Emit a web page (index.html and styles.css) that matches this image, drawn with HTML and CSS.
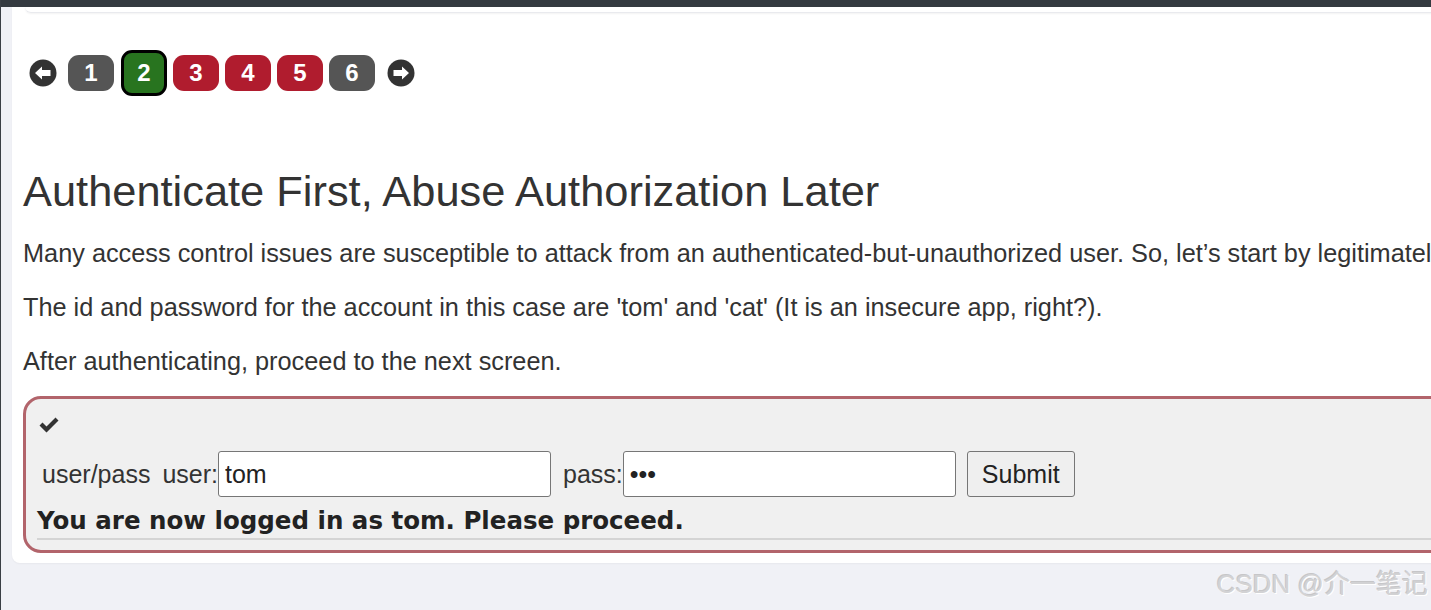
FILE: index.html
```html
<!DOCTYPE html>
<html>
<head>
<meta charset="utf-8">
<link rel="stylesheet" href="styles.css">
</head>
<body>
<div class="topbar"></div>
<div class="page">
  <div class="card">
    <div class="prev-card"></div>
    <div class="content">
      <div class="pager">
        <span class="arrow">
          <svg width="28" height="28" viewBox="0 0 28 28"><circle cx="14" cy="14" r="13.5" fill="#333"/><path d="M6 14 L13 7.5 L13 11 L21.5 11 L21.5 17 L13 17 L13 20.5 Z" fill="#fff"/></svg>
        </span>
        <span class="pg gray">1</span>
        <span class="pg green">2</span>
        <span class="pg red">3</span>
        <span class="pg red">4</span>
        <span class="pg red">5</span>
        <span class="pg gray">6</span>
        <span class="arrow arrow-right">
          <svg width="28" height="28" viewBox="0 0 28 28"><circle cx="14" cy="14" r="13.5" fill="#333"/><path d="M22 14 L15 7.5 L15 11 L6.5 11 L6.5 17 L15 17 L15 20.5 Z" fill="#fff"/></svg>
        </span>
      </div>
      <h2 class="title">Authenticate First, Abuse Authorization Later</h2>
      <p class="para">Many access control issues are susceptible to attack from an authenticated-but-unauthorized user. So, let’s start by legitimately authenticating. Then, we will look for ways to exploit authorization weaknesses.</p>
      <p class="para">The id and password for the account in this case are 'tom' and 'cat' (It is an insecure app, right?).</p>
      <p class="para">After authenticating, proceed to the next screen.</p>
      <div class="attack">
        <div class="check">
          <svg width="22" height="18" viewBox="0 0 22 18"><path d="M1.5 9.5 L4.5 6.5 L8.5 10.5 L17.5 1.5 L20.5 4.5 L8.5 16.5 Z" fill="#333"/></svg>
        </div>
        <form class="row">
          <span class="lbl">user/pass</span>
          <span class="lbl user-lbl">user:</span><input class="field" type="text" value="tom">
          <span class="lbl pass-lbl">pass:</span><input class="field" type="password" value="cat">
          <button class="submit" type="button">Submit</button>
        </form>
        <div class="msg">You are now logged in as tom. Please proceed.</div>
        <div class="rule"></div>
      </div>
    </div>
  </div>
  <div class="watermark">CSDN @介一笔记</div>
</div>
</body>
</html>
```

FILE: styles.css
```css
html, body {
  margin: 0;
  padding: 0;
  overflow: hidden;
}
body {
  width: 1431px;
  height: 610px;
  background: #f0f1f6;
  font-family: "Liberation Sans", Arial, sans-serif;
  color: #333;
  border-left: 1px solid #3a3f45;
  box-sizing: border-box;
}
.topbar {
  height: 7px;
  background: #343a40;
}
.page {
  padding-left: 11px;
  position: relative;
  height: 603px;
}
.card {
  width: 2600px;
  background: #fff;
  border-radius: 0 0 0 8px;
  height: 556px;
  box-shadow: 0 1px 2px rgba(0,0,0,0.04);
}
.prev-card {
  margin-left: 13px;
  height: 5px;
  border-bottom: 1px solid #e9eaee;
  border-radius: 0 0 8px 8px;
  box-shadow: 0 1px 2px rgba(0,0,0,0.05);
}
.content {
  padding-left: 11px;
}
.pager {
  display: flex;
  align-items: center;
  margin-left: 6px;
  margin-top: 37px;
  height: 46px;
}
.arrow {
  display: flex;
  width: 28px;
  height: 28px;
  margin-right: 11px;
}
.arrow-right {
  margin-left: 6px;
  margin-right: 0;
}
.pg {
  display: flex;
  align-items: center;
  justify-content: center;
  width: 46px;
  height: 36px;
  border-radius: 11px;
  color: #fff;
  font-weight: bold;
  font-size: 24px;
  margin-right: 6px;
  box-sizing: border-box;
}
.pg.gray { background: #555555; }
.pg.red { background: #b01c2e; }
.pg.green {
  background: #28741f;
  border: 3px solid #000;
  height: 46px;
  width: 46px;
  margin-left: 1px;
}
.title {
  font-size: 43.4px;
  font-weight: normal;
  line-height: 48px;
  margin: 71px 0 0 0;
}
.para {
  font-size: 25.3px;
  line-height: 32px;
  margin: 22px 0 0 0;
  white-space: nowrap;
}
.title + .para {
  margin-top: 22px;
}
.attack {
  margin-top: 19px;
  border: 3px solid #b2646b;
  border-radius: 18px;
  background: #f0f0f0;
  box-sizing: border-box;
  height: 157px;
  padding: 15px 0 0 11px;
}
.check {
  height: 22px;
  padding-left: 1px;
  display: flex;
  align-items: center;
}
.row {
  display: flex;
  align-items: center;
  margin: 15px 0 0 5px;
  height: 46px;
  font-size: 25px;
}
.lbl {
  color: #333;
}
.user-lbl {
  margin-left: 12px;
}
.pass-lbl {
  margin-left: 12px;
}
.field {
  width: 333px;
  height: 46px;
  box-sizing: border-box;
  border: 1px solid #767676;
  border-radius: 3px;
  background: #fff;
  font-family: "Liberation Sans", Arial, sans-serif;
  font-size: 25px;
  color: #222;
  padding: 0 6px;
  margin: 0;
}
.submit {
  margin-left: 11px;
  width: 108px;
  height: 46px;
  box-sizing: border-box;
  border: 1px solid #767676;
  border-radius: 3px;
  background: #efefef;
  font-family: "Liberation Sans", Arial, sans-serif;
  font-size: 25px;
  color: #222;
  padding: 0;
}
.msg {
  font-family: "DejaVu Sans", Verdana, sans-serif;
  font-weight: bold;
  font-size: 24.5px;
  line-height: 28px;
  margin-top: 10px;
  color: #222;
  white-space: nowrap;
}
.rule {
  margin-top: 3px;
  border-top: 2px solid #d4d4d4;
}
.watermark {
  position: absolute;
  right: 3px;
  top: 556px;
  font-family: "Liberation Sans", Arial, "Noto Sans CJK SC", sans-serif;
  font-size: 26px;
  color: #d2d2d4;
  text-shadow: 1px 1px 0 #fff, -1px -1px 0 #c6c6c8;
}
```
